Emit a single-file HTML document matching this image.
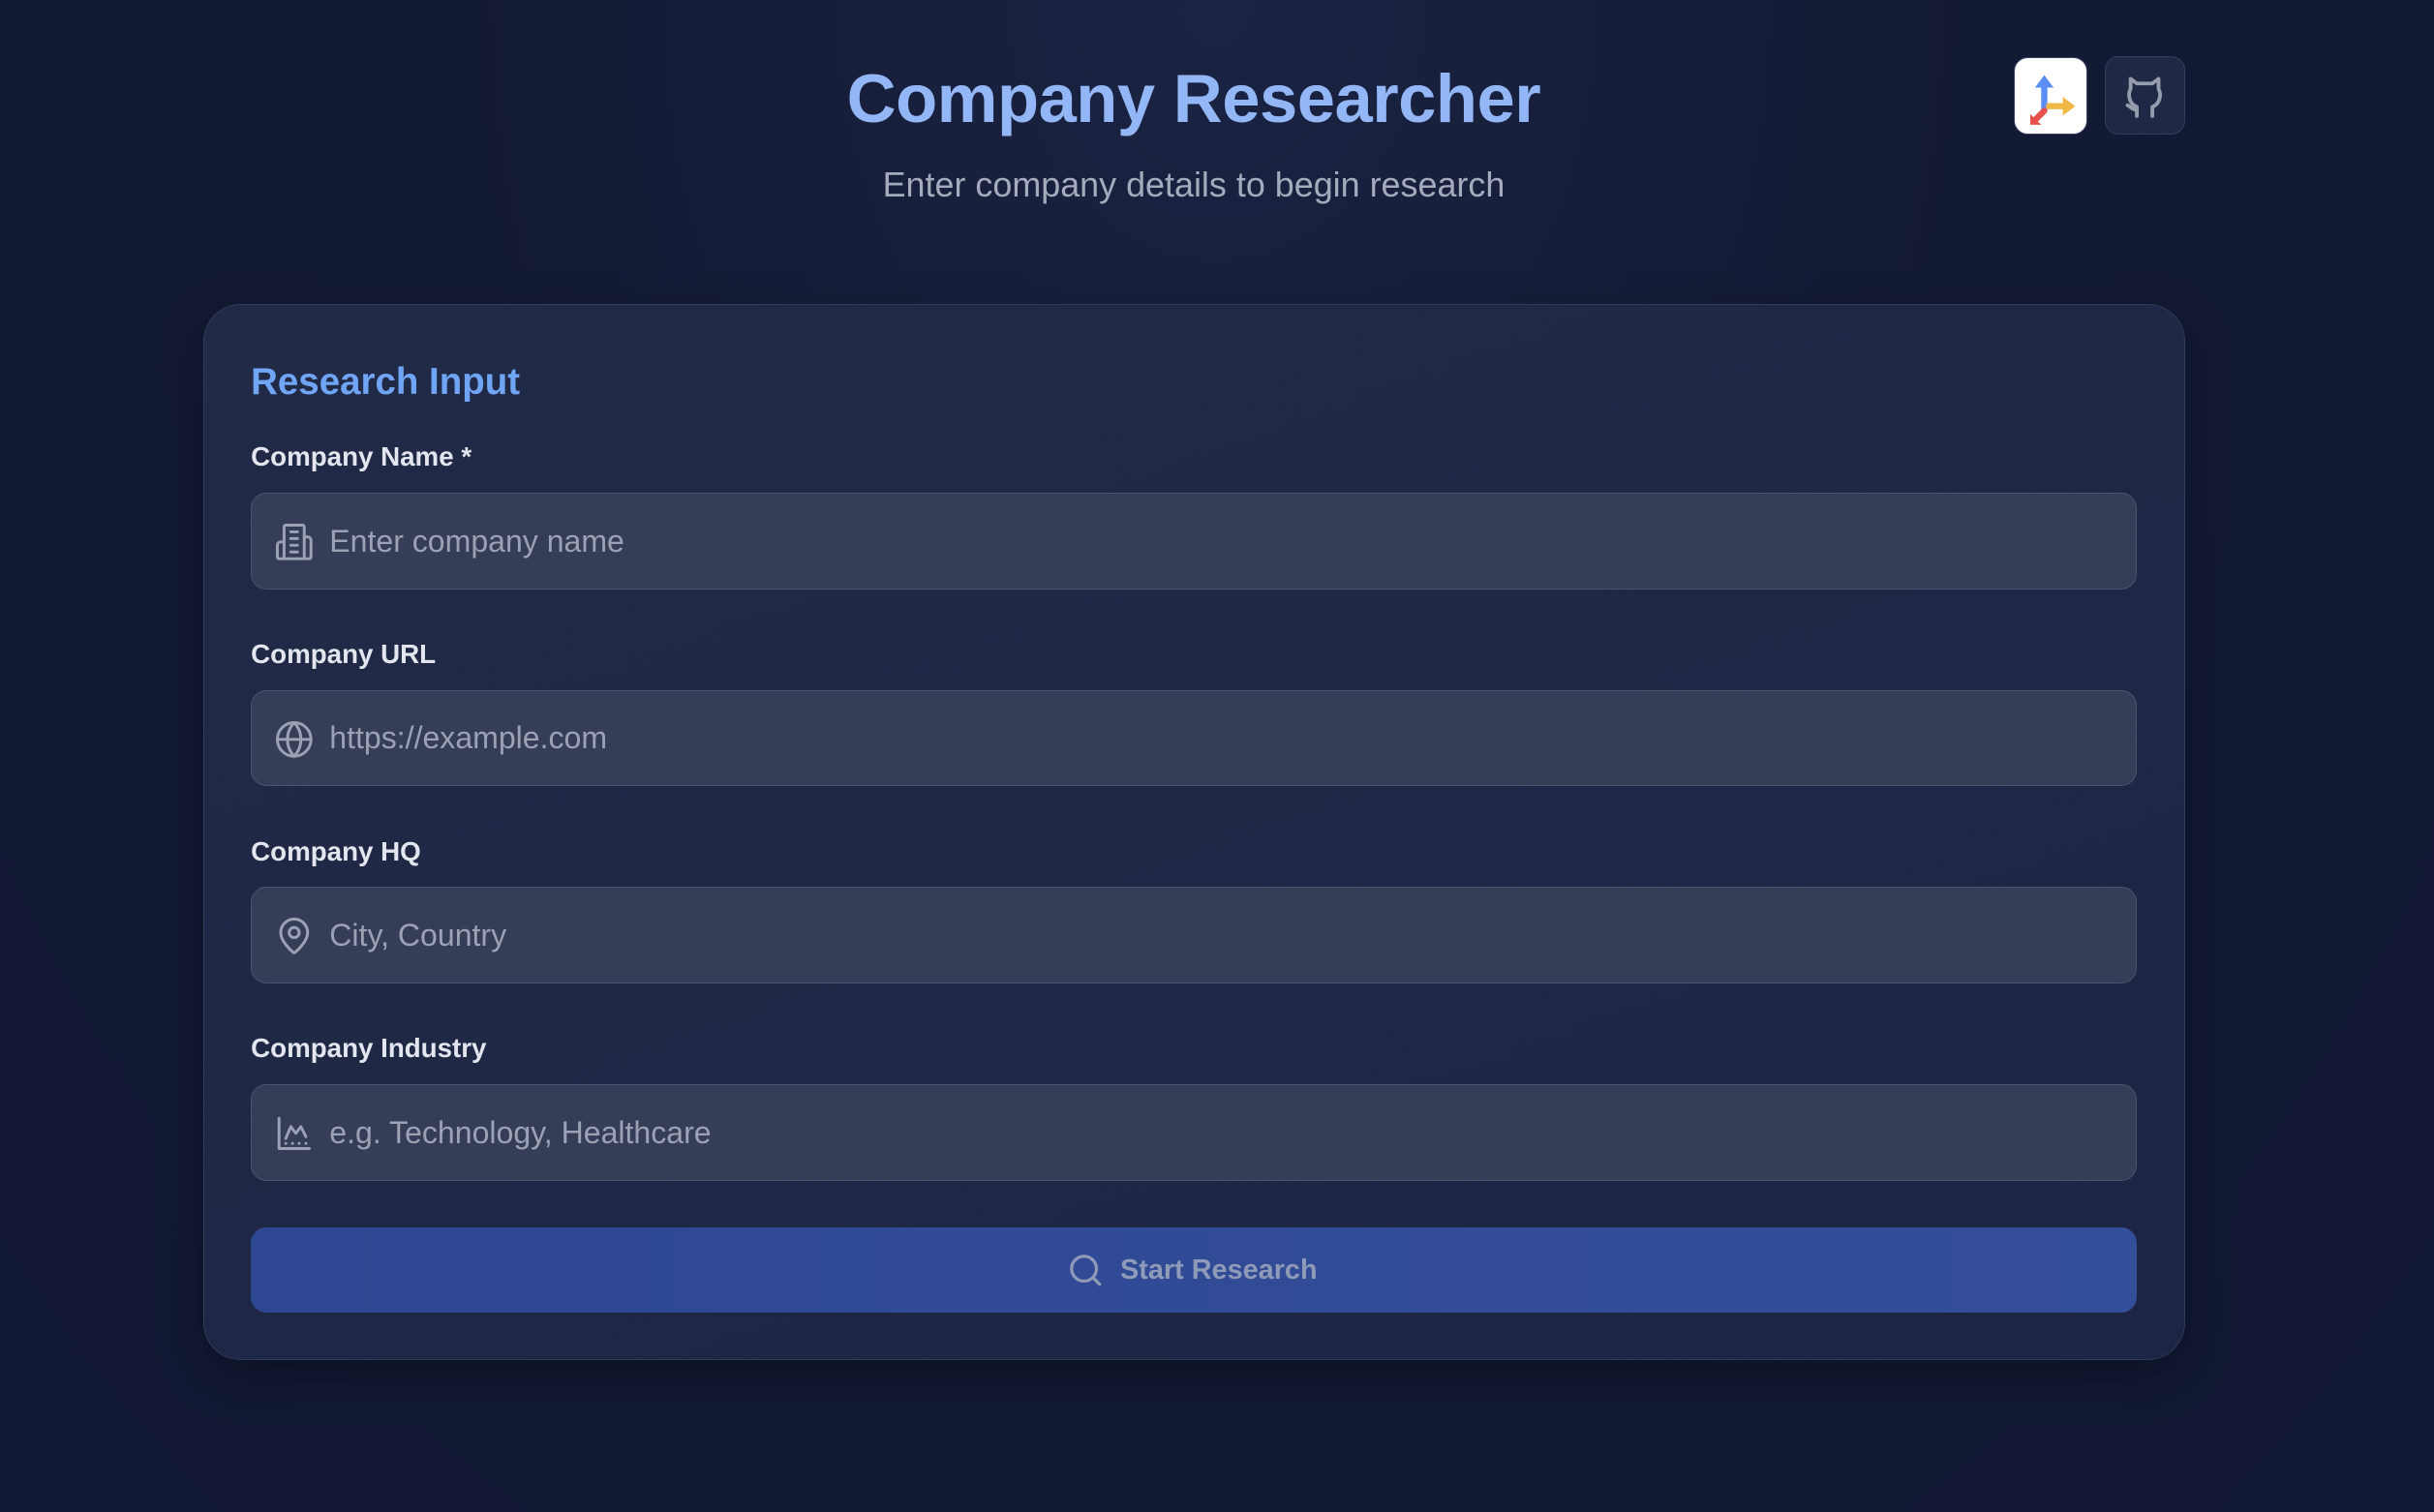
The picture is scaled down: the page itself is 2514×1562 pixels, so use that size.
<!DOCTYPE html>
<html><head><meta charset="utf-8">
<style>
html,body{margin:0;padding:0;}
body{width:1568px;height:974px;zoom:1.60332;overflow:hidden;
background:radial-gradient(ellipse at 50% 0%,#1a2342 0%,#131a33 45%,#111833 100%);
font-family:"Liberation Sans",sans-serif;position:relative;}
h1{position:absolute;left:0;width:1538px;top:38px;margin:0;text-align:center;font-size:44px;font-weight:700;color:#93b6f6;letter-spacing:-0.3px}
.sub{position:absolute;left:0;width:1538px;top:106px;text-align:center;font-size:22.4px;color:#a3abbc}
.btn{position:absolute;top:37px;width:48px;height:50px;border-radius:9px;box-sizing:border-box}
.logo{left:1297px;background:#fff;border:1px solid #3a4466}
.gh{left:1356px;width:52px;height:51px;top:36px;background:#1f2844;border:1px solid #343e5c}
.card{position:absolute;left:131px;top:196px;width:1277px;height:680px;box-sizing:border-box;border-radius:24px;
background:linear-gradient(160deg,#212a46,#1c2544);border:1px solid #323c5a;box-shadow:0 10px 30px rgba(0,0,0,.3)}
.ct{position:absolute;left:30px;top:36px;font-size:24px;font-weight:700;color:#70a5f5}
.lbl{position:absolute;left:30px;font-size:17.3px;font-weight:700;color:#e3e6ee}
.inp{position:absolute;left:30px;width:1215px;height:62px;box-sizing:border-box;border-radius:10px;background:#363d57;border:1px solid #4b5371}
.inp span{position:absolute;left:50px;top:19px;font-size:20px;color:#9aa2b4}
.inp svg{position:absolute;left:14px;top:18px}
.go{position:absolute;left:30px;top:594px;width:1215px;height:55px;border-radius:10px;background:linear-gradient(90deg,#2d4792,#344f9a)}
.go span{position:absolute;left:560px;top:18px;font-size:18px;font-weight:700;color:#8e9ab8}
.go svg{position:absolute;left:526px;top:16px}
</style></head><body>
<h1>Company Researcher</h1>
<div class="sub">Enter company details to begin research</div>
<div class="btn logo"><svg width="48" height="50" viewBox="0 0 48 50">
<path d="M19 34V16" stroke="#5b8ef5" stroke-width="4" stroke-linecap="round"/><path d="M13 19l6-8 6 8z" fill="#5b8ef5"/>
<path d="M22 31h10" stroke="#f0b845" stroke-width="4" stroke-linecap="round"/><path d="M31 25l8 6-8 6z" fill="#f0b845"/>
<path d="M19 34l-5 5" stroke="#e8504a" stroke-width="4" stroke-linecap="round"/><path d="M10 36l0 7 7 0z" fill="#e8504a"/></svg></div>
<div class="btn gh"><svg width="50" height="49" viewBox="0 0 50 49" fill="none" stroke="#959cab" stroke-width="2.4" stroke-linecap="round" stroke-linejoin="round">
<path d="M20 38v-6c-3-1-5-4-5-8 0-2 1-3 1-4v-6l4 3h10l4-3v6c0 1 1 2 1 4 0 4-2 7-5 8v6"/><path d="M20 34c-3 0-4-2-6-3"/></svg></div>
<div class="card">
<div class="ct">Research Input</div>
<div class="lbl" style="top:88px">Company Name *</div>
<div class="inp" style="top:121px"><svg width="26" height="26" viewBox="0 0 24 24" fill="none" stroke="#9aa2b4" stroke-width="1.7" stroke-linecap="round" stroke-linejoin="round"><path d="M6 22V3a1 1 0 0 1 1-1h10a1 1 0 0 1 1 1v19z"/><path d="M6 12H4a2 2 0 0 0-2 2v7a1 1 0 0 0 1 1h3M18 9h2a2 2 0 0 1 2 2v10a1 1 0 0 1-1 1h-3M10 6h4M10 10h4M10 14h4M10 18h4"/></svg><span>Enter company name</span></div>
<div class="lbl" style="top:215px">Company URL</div>
<div class="inp" style="top:248px"><svg width="26" height="26" viewBox="0 0 24 24" fill="none" stroke="#9aa2b4" stroke-width="1.7"><circle cx="12" cy="12" r="10"/><path d="M12 2a14.5 14.5 0 0 0 0 20 14.5 14.5 0 0 0 0-20M2 12h20"/></svg><span>https://example.com</span></div>
<div class="lbl" style="top:342px">Company HQ</div>
<div class="inp" style="top:375px"><svg width="26" height="26" viewBox="0 0 24 24" fill="none" stroke="#9aa2b4" stroke-width="1.7"><path d="M20 10c0 5-5.5 10.2-7.4 11.8a1 1 0 0 1-1.2 0C9.5 20.2 4 15 4 10a8 8 0 0 1 16 0"/><circle cx="12" cy="10" r="3"/></svg><span>City, Country</span></div>
<div class="lbl" style="top:469px">Company Industry</div>
<div class="inp" style="top:502px"><svg width="26" height="26" viewBox="0 0 24 24" fill="none" stroke="#9aa2b4" stroke-width="1.7" stroke-linecap="round" stroke-linejoin="round"><path d="M3 3v18h18"/><path d="M7 15l3-7 3 4 3-4 3 6"/><path d="M7 18h.01M11 18h.01M15 18h.01M19 18h.01"/></svg><span>e.g. Technology, Healthcare</span></div>
<div class="go"><svg width="24" height="24" viewBox="0 0 24 24" fill="none" stroke="#8e9ab8" stroke-width="2" stroke-linecap="round"><circle cx="11" cy="11" r="8"/><path d="M21 21l-4.3-4.3"/></svg><span>Start Research</span></div>
</div>
</body></html>
